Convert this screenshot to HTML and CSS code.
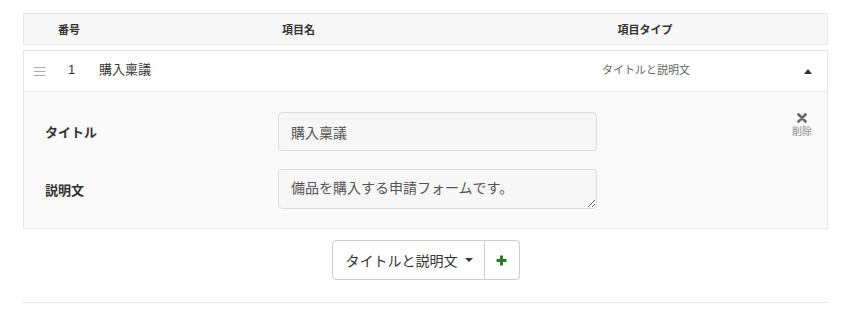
FILE: index.html
```html
<!DOCTYPE html>
<html lang="ja">
<head>
    <meta charset="UTF-8">
    <meta name="viewport" content="width=device-width, initial-scale=1.0">
    <title>項目設定</title>
    <link rel="stylesheet" href="styles.css">
</head>
<body>
    <div class="list-header">
        <div>番号</div>
        <div>項目名</div>
        <div class="col-type">項目タイプ</div>
        <div></div>
    </div>

    <div class="item-panel">
        <div class="item-row">
            <span class="handle"><i></i><i></i><i></i></span>
            <span class="item-no">1</span>
            <span class="item-title">購入稟議</span>
            <span class="item-type">タイトルと説明文</span>
            <span class="toggle"><i class="caret-up"></i></span>
        </div>
        <div class="item-body">
            <div class="fields">
                <div class="field">
                    <label class="field-label">タイトル</label>
                    <input class="field-input" type="text" value="購入稟議">
                </div>
                <div class="field">
                    <label class="field-label">説明文</label>
                    <textarea class="field-input field-textarea">備品を購入する申請フォームです。</textarea>
                </div>
            </div>
            <div class="delete">
                <svg class="delete-icon" width="10" height="10" viewBox="0 0 10 10">
                    <path d="M1.5 1.5 L8.5 8.5 M8.5 1.5 L1.5 8.5" stroke="#666" stroke-width="2.6" stroke-linecap="round"/>
                </svg>
                <span class="delete-text">削除</span>
            </div>
        </div>
    </div>

    <div class="add-group">
        <button class="add-type">タイトルと説明文 <i class="caret-down"></i></button>
        <button class="add-plus">
            <svg width="11" height="11" viewBox="0 0 11 11">
                <path d="M5.5 0.5 V10.5 M0.5 5.5 H10.5" stroke="#2b7a2b" stroke-width="3"/>
            </svg>
        </button>
    </div>

    <div class="footer-line"></div>
</body>
</html>
```

FILE: styles.css
```css
body {
    margin: 0;
    padding: 13px 22px 0 23px;
    font-family: "Liberation Sans", "Noto Sans CJK JP", sans-serif;
    color: #333;
    background-color: #fff;
}
.list-header {
    display: grid;
    grid-template-columns: 224px 1fr 200px 82px;
    align-items: center;
    height: 30px;
    padding-left: 34px;
    background-color: #f7f7f7;
    border: 1px solid #e6e6e6;
    font-size: 11px;
    font-weight: bold;
}
.col-type {
    text-align: center;
}
.item-panel {
    margin-top: 5px;
    border: 1px solid #e6e6e6;
}
.item-row {
    display: grid;
    grid-template-columns: 34px 31px 1fr 200px 81px;
    align-items: center;
    height: 40px;
    padding-left: 10px;
    border-bottom: 1px solid #e6e6e6;
    background-color: #fff;
    line-height: 16px;
}
.handle {
    display: flex;
    flex-direction: column;
    gap: 3px;
    width: 11px;
}
.handle i {
    display: block;
    height: 1px;
    background-color: #aaa;
}
.item-no,
.item-title {
    font-size: 13px;
    margin-top: -2px;
}
.item-type {
    font-size: 11px;
    color: #666;
    text-align: center;
    margin-top: -2px;
}
.toggle {
    display: flex;
    justify-content: flex-end;
    padding-right: 15px;
}
.caret-up {
    width: 0;
    height: 0;
    border-left: 4.5px solid transparent;
    border-right: 4.5px solid transparent;
    border-bottom: 5px solid #333;
}
.item-body {
    display: flex;
    justify-content: space-between;
    padding: 20px 14px 19px 21px;
    background-color: #fafafa;
}
.fields {
    display: flex;
    flex-direction: column;
    gap: 18px;
}
.field {
    display: flex;
    align-items: center;
}
.field-label {
    width: 233px;
    font-size: 13px;
    font-weight: bold;
}
.field-input {
    box-sizing: border-box;
    width: 319px;
    height: 39px;
    margin: 0;
    padding: 0 12px;
    font-family: inherit;
    font-size: 14px;
    color: #555;
    background-color: #f7f7f7;
    border: 1px solid #dcdcdc;
    border-radius: 4px;
    outline: none;
}
.field-textarea {
    height: 40px;
    padding: 8px 12px 0;
    line-height: 20px;
    resize: vertical;
    overflow: hidden;
}
.delete {
    display: flex;
    flex-direction: column;
    align-items: center;
    width: 22px;
}
.delete-icon {
    margin-top: 1px;
}
.delete-text {
    margin-top: 2px;
    font-size: 10px;
    line-height: 14px;
    color: #888;
}
.add-group {
    display: flex;
    justify-content: center;
    margin-top: 11px;
}
.add-group button {
    display: flex;
    align-items: center;
    justify-content: center;
    height: 40px;
    margin: 0;
    font-family: inherit;
    font-size: 14px;
    color: #333;
    background-color: #fff;
    border: 1px solid #ccc;
    white-space: nowrap;
    cursor: pointer;
}
.add-type {
    gap: 7px;
    padding: 0 11px 0 13px;
    border-radius: 4px 0 0 4px;
}
.caret-down {
    width: 0;
    height: 0;
    border-left: 4px solid transparent;
    border-right: 4px solid transparent;
    border-top: 4px solid #333;
}
.add-plus {
    width: 36px;
    padding: 0;
    margin-left: -1px !important;
    border-radius: 0 4px 4px 0;
}
.footer-line {
    margin-top: 22px;
    border-top: 1px solid #e6e6e6;
}
```
